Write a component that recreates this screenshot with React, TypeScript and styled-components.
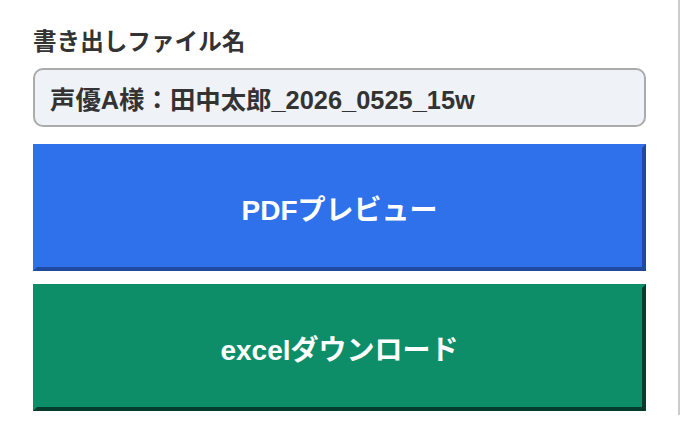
import React from 'react';
import styled, {createGlobalStyle} from 'styled-components';

const GlobalStyle = createGlobalStyle`
  html, body {
    margin: 0;
    padding: 0;
    background: #ffffff;
  }

  body {
    font-family: "Liberation Sans", "Noto Sans CJK JP", sans-serif;
  }
`;

const Panel = styled.div`
  box-sizing: border-box;
  width: 680px;
  height: 415px;
  border-right: 2px solid #cccccc;
  padding: 26px 32px 0 33px;
  display: flex;
  flex-direction: column;
`;

const FieldLabel = styled.label`
  font-size: 23.6px;
  font-weight: 700;
  line-height: 32px;
  color: #333333;
  margin-bottom: 10px;
`;

const FileNameInput = styled.input`
  box-sizing: border-box;
  width: 613px;
  height: 59px;
  border: 2px solid #ababab;
  border-radius: 10px;
  background: #eff2f7;
  padding: 0 15px;
  font-family: inherit;
  font-size: 25.4px;
  font-weight: 700;
  color: #333333;
  outline: none;
`;

const ButtonStack = styled.div`
  display: flex;
  flex-direction: column;
  gap: 13px;
  margin-top: 17px;
`;

const ActionButton = styled.button<{ $bg: string; $edge: string }>`
  box-sizing: border-box;
  width: 613px;
  height: 127px;
  border-style: solid;
  border-width: 4px;
  border-color: ${p => p.$bg} ${p => p.$edge} ${p => p.$edge} ${p => p.$bg};
  border-radius: 0;
  background: ${p => p.$bg};
  color: #ffffff;
  font-family: inherit;
  font-size: 28px;
  font-weight: 700;
  cursor: pointer;
  padding: 0;
`;

export default function App() {
    return <>
        <GlobalStyle/>
        <Panel>
            <FieldLabel htmlFor="export-name">書き出しファイル名</FieldLabel>
            <FileNameInput id="export-name" defaultValue="声優A様：田中太郎_2026_0525_15w"/>
            <ButtonStack>
                <ActionButton $bg="#2f71ea" $edge="#1f4aa0">PDFプレビュー</ActionButton>
                <ActionButton $bg="#0e8d69" $edge="#053c2b">excelダウンロード</ActionButton>
            </ButtonStack>
        </Panel>
    </>;
}
